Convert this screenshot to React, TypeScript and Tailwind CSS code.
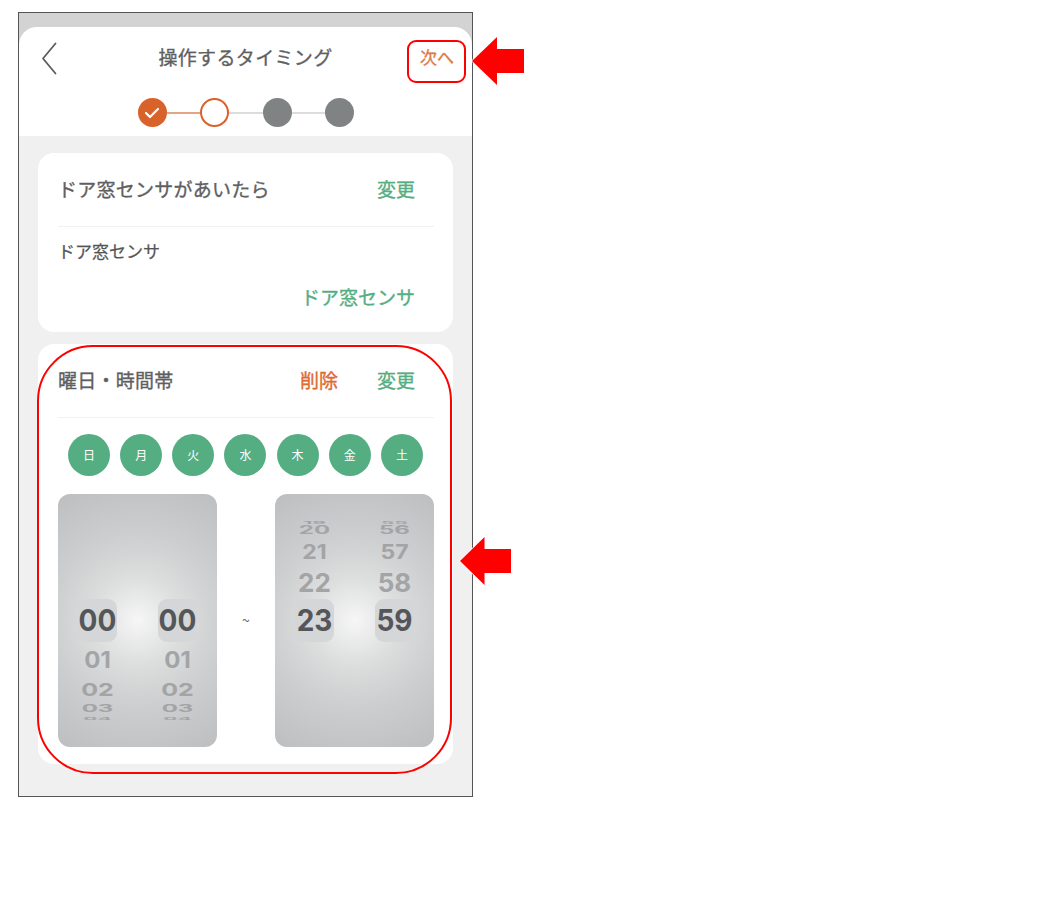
const jp = "font-['Noto_Sans_CJK_JP','Liberation_Sans',sans-serif]";

type Tick = { label: string; h: string; cls: string };

// 数字は縦につぶしてホイールの奥行きを出す
const below: Tick[] = [
  { label: "01", h: "h-[35px]", cls: "text-[24px] scale-y-[0.95]" },
  { label: "02", h: "h-[24px]", cls: "text-[25px] scale-y-[0.72]" },
  { label: "03", h: "h-[16px]", cls: "text-[24px] scale-y-[0.42]" },
  { label: "04", h: "h-[2px]", cls: "text-[21px] scale-y-[0.17]" },
];

function Selected({ label }: { label: string }) {
  return (
    <div className="w-[39px] h-[43px] rounded-[9px] bg-[#d5d6d8] flex items-center justify-center shrink-0">
      <span className="text-[28px] font-bold text-[#54565a] leading-none scale-y-[1.05]">{label}</span>
    </div>
  );
}

function Faded({ t }: { t: Tick }) {
  return (
    <div className={`${t.h} w-[39px] flex items-center justify-center shrink-0`}>
      <span className={`${t.cls} font-bold text-[#a2a4a6] leading-none`}>{t.label}</span>
    </div>
  );
}

function Wheel({ columns, up }: { columns: { selected: string; ticks: Tick[] }[]; up?: boolean }) {
  return (
    <div className="w-[159px] h-[253px] rounded-[12px] px-[20px] flex justify-between font-['Inter',sans-serif] bg-[radial-gradient(circle_at_center,#f6f6f6_0%,#dcdddd_30%,#cbcdce_60%,#bcbec0_100%)]">
      {columns.map((c, i) => (
        <div key={i} className={`flex flex-col w-[39px] ${up ? "justify-end pb-[105px]" : "pt-[105px]"}`}>
          {up ? (
            <>
              {c.ticks.map((t) => <Faded key={t.label} t={t} />)}
              <Selected label={c.selected} />
            </>
          ) : (
            <>
              <Selected label={c.selected} />
              {c.ticks.map((t) => <Faded key={t.label} t={t} />)}
            </>
          )}
        </div>
      ))}
    </div>
  );
}

function Step({ kind }: { kind: "done" | "current" | "todo" }) {
  if (kind === "done") {
    return (
      <div className="w-[29px] h-[29px] rounded-full bg-[#d9622b] flex items-center justify-center shrink-0">
        <svg width="16" height="12" viewBox="0 0 16 12" fill="none">
          <path d="M2 6l4 4 8-8" stroke="#fff" strokeWidth="2.2" strokeLinecap="round" strokeLinejoin="round" />
        </svg>
      </div>
    );
  }
  if (kind === "current") {
    return <div className="w-[29px] h-[29px] rounded-full bg-white border-2 border-[#d9622b] shrink-0" />;
  }
  return <div className="w-[29px] h-[29px] rounded-full bg-[#7f8383] shrink-0" />;
}

function Arrow({ className }: { className: string }) {
  return (
    <svg className={className} height="50" viewBox="0 0 54 50" preserveAspectRatio="none">
      <path d="M1 25L26 1V13H53V37H26V49Z" fill="#ff0000" stroke="#fff" strokeWidth="1.5" paintOrder="stroke" />
    </svg>
  );
}

export default function App() {
  const days = ["日", "月", "火", "水", "木", "金", "土"];
  const startCols = [
    { selected: "00", ticks: below },
    { selected: "00", ticks: below },
  ];
  const endCols = [
    {
      selected: "23",
      ticks: [
        { label: "19", h: "h-[2px]", cls: "text-[21px] scale-y-[0.15]" },
        { label: "20", h: "h-[14px]", cls: "text-[24px] scale-y-[0.46]" },
        { label: "21", h: "h-[30px]", cls: "text-[23px] scale-y-[0.85]" },
        { label: "22", h: "h-[32px]", cls: "text-[26px] scale-y-[1]" },
      ],
    },
    {
      selected: "59",
      ticks: [
        { label: "55", h: "h-[2px]", cls: "text-[21px] scale-y-[0.15]" },
        { label: "56", h: "h-[14px]", cls: "text-[24px] scale-y-[0.46]" },
        { label: "57", h: "h-[30px]", cls: "text-[23px] scale-y-[0.85]" },
        { label: "58", h: "h-[32px]", cls: "text-[26px] scale-y-[1]" },
      ],
    },
  ];

  return (
    <div className={`${jp} bg-white h-[906px] pt-[12px] pl-[18px]`}>
      <div className="relative w-[455px] h-[785px] border border-[#555] bg-[#f0f0f0]">
        {/* ヘッダー */}
        <div className="bg-[#d3d3d3] pt-[14px]">
          <div className="bg-white rounded-t-[18px] h-[109px]">
            <div className="grid grid-cols-[1fr_auto_1fr] items-center h-[62px] pl-[22px] pr-[18px]">
              <svg width="16" height="33" viewBox="0 0 16 33" fill="none">
                <path d="M14.5 1.5L2 16.5l12.5 15" stroke="#5a5c5e" strokeWidth="1.8" strokeLinecap="round" strokeLinejoin="round" />
              </svg>
              <h1 className="text-[19px] font-normal tracking-[0.35px] text-[#5f5f5f] mt-[-2px] ml-[-4px] [-webkit-text-stroke:0.35px]">操作するタイミング</h1>
              <span className="text-[17px] font-normal text-[#e07a45] mt-[-2px] justify-self-end [-webkit-text-stroke:0.35px]">次へ</span>
            </div>
            <div className="flex items-center justify-center mt-[9px]">
              <Step kind="done" />
              <div className="w-[33px] h-[2px] bg-[#e3a585]" />
              <Step kind="current" />
              <div className="w-[34px] h-[2px] bg-[#dcdcdc]" />
              <Step kind="todo" />
              <div className="w-[33px] h-[2px] bg-[#dcdcdc]" />
              <Step kind="todo" />
            </div>
          </div>
        </div>

        <div className="px-[19px] pt-[17px] flex flex-col gap-[12px]">
          {/* トリガー */}
          <div className="bg-white rounded-[16px] h-[179px] pl-[20px] pr-[19px]">
            <div className="h-[74px] flex items-center justify-between pr-[19px] pb-[1px] border-b border-[#f1f1f1]">
              <span className="text-[19px] tracking-[0.25px] text-[#5f5f5f] [-webkit-text-stroke:0.35px]">ドア窓センサがあいたら</span>
              <span className="text-[19px] text-[#55ad82] [-webkit-text-stroke:0.35px]">変更</span>
            </div>
            <p className="text-[17px] text-[#555] mt-[11px] leading-[25px] [-webkit-text-stroke:0.25px]">ドア窓センサ</p>
            <p className="text-[19px] text-[#55ad82] text-right pr-[19px] mt-[20px] leading-[28px] [-webkit-text-stroke:0.35px]">ドア窓センサ</p>
          </div>

          {/* 曜日・時間帯 */}
          <div className="bg-white rounded-[16px] h-[420px] pl-[20px] pr-[19px]">
            <div className="h-[74px] flex items-center pr-[19px] pb-[1px] border-b border-[#f1f1f1]">
              <span className="text-[19px] tracking-[0.25px] text-[#5f5f5f] flex-1 [-webkit-text-stroke:0.35px]">曜日・時間帯</span>
              <span className="text-[19px] text-[#e0692f] mr-[39px] [-webkit-text-stroke:0.35px]">削除</span>
              <span className="text-[19px] text-[#55ad82] [-webkit-text-stroke:0.35px]">変更</span>
            </div>
            <div className="flex justify-between pl-[10px] pr-[11px] mt-[16px]">
              {days.map((d) => (
                <div key={d} className="w-[42px] h-[42px] rounded-full bg-[#55ad82] text-white text-[12px] flex items-center justify-center">
                  {d}
                </div>
              ))}
            </div>
            <div className="flex justify-between items-center mt-[18px]">
              <Wheel columns={startCols} />
              <span className="text-[14px] text-[#666]">~</span>
              <Wheel columns={endCols} up />
            </div>
          </div>
        </div>

        {/* 注釈 */}
        <div className="absolute left-[388px] top-[27px] w-[59px] h-[43px] rounded-[9px] border-2 border-[#ff0000]" />
        <div className="absolute left-[18px] top-[332px] w-[415px] h-[429px] rounded-[56px] border-2 border-[#ff0000]" />
        <Arrow className="absolute left-[452px] top-[23px] w-[54px]" />
        <Arrow className="absolute left-[440px] top-[523px] w-[53px]" />
      </div>
    </div>
  );
}
